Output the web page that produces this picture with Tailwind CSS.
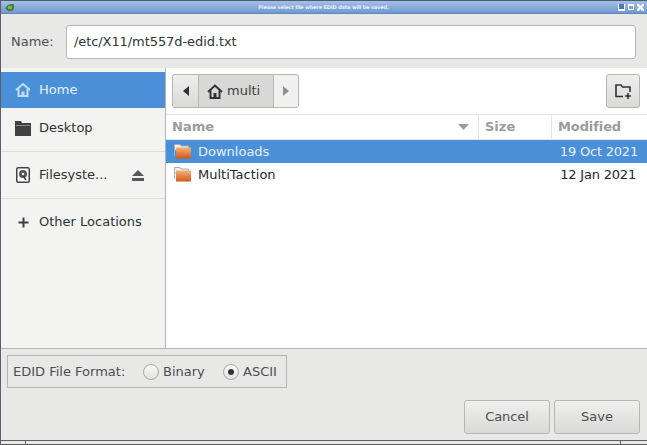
<!DOCTYPE html>
<html lang="en">
<head>
    <title>Save EDID</title>
    <meta name="viewport" content="width=device-width, initial-scale=1.0">
    <script src="https://cdn.jsdelivr.net/npm/@tailwindcss/browser@4"></script>
</head>
<body class="w-[647px] h-[445px] overflow-hidden bg-[#e8e8e7] text-[13px] text-[#2e3436] font-['DejaVu_Sans',sans-serif]">
    <div class="h-[445px] flex flex-col border-l border-[#5c5f66]">
        <!-- Title bar -->
        <header class="h-[14px] shrink-0 flex items-center justify-between pl-[4px] pr-[3px] border-t border-[#4b5a75] border-b border-b-[#5f86bd] bg-gradient-to-b from-[#a4c1e3] to-[#6e99d0]">
            <svg width="9" height="7" viewBox="0 0 9 7"><path d="M0 4 L3 1 L6 0 H9 V5 L7 7 H3 Z" fill="#4d7a35"/><path d="M3 2 H7 V5 H3 Z" fill="#7fb04f"/></svg>
            <span class="text-[5px] leading-none font-bold tracking-[-0.14px] text-white/80 ml-[15px]">Please select file where EDID data will be saved.</span>
            <div class="flex items-center gap-[3px]">
                <svg width="7" height="7" viewBox="0 0 7 7"><rect width="7" height="7" fill="#fff"/><rect x="1" y="0" width="5" height="5" fill="#4f79b2"/></svg>
                <svg width="6" height="6" viewBox="0 0 6 6"><rect width="6" height="6" fill="#fff"/><rect x="1" y="2" width="4" height="3" fill="#7ea5d8"/></svg>
                <svg width="7" height="7" viewBox="0 0 7 7"><path d="M0 0 H2 L3.5 2 L5 0 H7 V2 L5 3.5 L7 5 V7 H5 L3.5 5 L2 7 H0 V5 L2 3.5 L0 2 Z" fill="#fff"/></svg>
            </div>
        </header>

        <!-- Name row -->
        <div class="h-[54px] shrink-0 flex items-center pl-[10px] pr-[10px] pt-[1px]">
            <label class="w-[55px] text-[#4b4f50]">Name:</label>
            <div class="w-[570px] h-[34px] flex items-center pl-[7px] tracking-[-0.08px] bg-white border border-[#b5b5b3] rounded-[3px] text-[#2e3436]">/etc/X11/mt557d-edid.txt</div>
        </div>

        <!-- Places sidebar and file list -->
        <div class="h-[281px] shrink-0 flex border-b border-[#b5b5b3]">
            <aside class="w-[165px] shrink-0 bg-[#f3f3f2] border-r border-[#b5b5b3] pt-[4px]">
                <div class="h-[36px] flex items-center pl-[14px] gap-[8px] bg-[#4a90d9] text-[#e8f1fb]">
                    <svg width="16" height="16" viewBox="0 0 16 16" fill="none" stroke="#c5dcf5" stroke-width="2"><path d="M1 8 L8 2 L15 8"/><path d="M3.5 7 V14 H12.5 V7"/><rect x="6.5" y="9.5" width="3" height="4.5" fill="#c5dcf5" stroke="none"/></svg>
                    <span>Home</span>
                </div>
                <div class="h-[44px] pb-[3px] flex items-center pl-[14px] gap-[8px] border-b border-[#dcdcda]">
                    <svg width="16" height="16" viewBox="0 0 16 16"><path d="M0 1 H6 L7 3 H16 V16 H0 Z" fill="#3f4142"/><path d="M1 5 H15 V6 H1 Z" fill="#8a8c8c"/></svg>
                    <span>Desktop</span>
                </div>
                <div class="h-[47px] flex items-center pl-[15px] pr-[21px] border-b border-[#dcdcda]">
                    <svg class="mr-[9px]" width="14" height="16" viewBox="0 0 14 16"><rect x="0.75" y="0.75" width="12.5" height="14.5" rx="1.5" fill="#fff" stroke="#414344" stroke-width="1.5"/><circle cx="7" cy="7" r="4" fill="#55585a"/><circle cx="7" cy="7" r="1.2" fill="#fff"/><path d="M7 9 L10 13" stroke="#414344" stroke-width="1.5"/></svg>
                    <span class="flex-1">Filesyste...</span>
                    <svg width="12" height="11" viewBox="0 0 12 11" fill="#55585a"><path d="M6 0 L12 6 H0 Z"/><rect y="8" width="12" height="3"/></svg>
                </div>
                <div class="h-[46px] flex items-center pl-[17px] gap-[10px]">
                    <svg width="11" height="11" viewBox="0 0 11 11" fill="#3f4142"><rect x="4.5" y="0.5" width="2" height="10"/><rect x="0.5" y="4.5" width="10" height="2"/></svg>
                    <span>Other Locations</span>
                </div>
            </aside>

            <main class="flex-1 bg-white flex flex-col">
                <!-- Path bar -->
                <div class="h-[46px] shrink-0 flex items-start justify-between pt-[6px] pl-[6px] pr-[7px]">
                    <div class="h-[34px] flex border border-[#b5b5b3] rounded-[3px] bg-[#f0f0ef]">
                        <div class="w-[26px] flex items-center justify-center border-r border-[#b5b5b3] bg-gradient-to-b from-[#efefee] to-[#d9d9d7] rounded-l-[3px]">
                            <svg width="6" height="10" viewBox="0 0 6 10" fill="#2e3436"><path d="M6 0 V10 L0 5 Z"/></svg>
                        </div>
                        <div class="w-[75px] flex items-center pl-[8px] gap-[4px] bg-[#d8d8d6] border-r border-[#b5b5b3] text-[#3d4142]">
                            <svg width="16" height="15" viewBox="0 0 16 15" fill="none" stroke="#2e3436" stroke-width="2"><path d="M1 8 L8 1.5 L15 8"/><path d="M3.5 6.5 V14 H12.5 V6.5"/><rect x="6.5" y="9" width="3" height="5" fill="#2e3436" stroke="none"/></svg>
                            <span>multi</span>
                        </div>
                        <div class="w-[24px] flex items-center justify-center">
                            <svg width="6" height="10" viewBox="0 0 6 10" fill="#8f9293"><path d="M0 0 V10 L6 5 Z"/></svg>
                        </div>
                    </div>
                    <div class="w-[34px] h-[34px] flex items-center justify-center border border-[#b5b5b3] rounded-[3px] bg-gradient-to-b from-[#efefee] to-[#d9d9d7]">
                        <svg width="17" height="15" viewBox="0 0 17 15" fill="none" stroke="#2e3436" stroke-width="1.6"><path d="M8 12.5 H1 V1 H6 L7.5 3 H15 V8"/><path d="M13 9 V15 M10 12 H16"/></svg>
                    </div>
                </div>

                <!-- File list -->
                <div class="h-[26px] shrink-0 flex items-center border-t border-b border-[#e6e6e5] font-bold text-[#9a9c9c]">
                    <div class="w-[313px] h-full flex items-center justify-between pl-[6px] pr-[9px] border-r border-[#e6e6e5]">
                        <span>Name</span>
                        <svg width="11" height="6" viewBox="0 0 11 6" fill="#9a9c9c"><path d="M0 0 H11 L5.5 6 Z"/></svg>
                    </div>
                    <div class="w-[73px] h-full flex items-center pl-[6px] border-r border-[#e6e6e5]">Size</div>
                    <div class="flex-1 pl-[6px] tracking-[-0.1px]">Modified</div>
                </div>
                <div class="h-[23px] flex items-center justify-between pl-[8px] pr-[9px] bg-[#4a90d9] text-[#e8f1fb]">
                    <div class="flex items-center gap-[7px]">
                        <svg width="17" height="15" viewBox="0 0 17 15"><defs><linearGradient id="folderFront" x1="0" y1="0" x2="0" y2="1"><stop offset="0" stop-color="#f4b27c"/><stop offset="1" stop-color="#d4561a"/></linearGradient></defs><path d="M0.5 12 V0.5 H6 L7 2 H14.5 V6 H0.5 Z" fill="#f1f0ee" stroke="#b5aea6"/><rect x="2" y="3.5" width="15" height="11" fill="url(#folderFront)"/></svg>
                        <span>Downloads</span>
                    </div>
                    <span class="tracking-[-0.2px]">19 Oct 2021</span>
                </div>
                <div class="h-[23px] flex items-center justify-between pl-[8px] pr-[11px] text-[#232729]">
                    <div class="flex items-center gap-[7px]">
                        <svg width="17" height="15" viewBox="0 0 17 15"><path d="M0.5 12 V0.5 H6 L7 2 H14.5 V6 H0.5 Z" fill="#f1f0ee" stroke="#b5aea6"/><rect x="2" y="3.5" width="15" height="11" fill="url(#folderFront)"/></svg>
                        <span>MultiTaction</span>
                    </div>
                    <span class="tracking-[-0.2px]">12 Jan 2021</span>
                </div>
            </main>
        </div>

        <!-- Format options -->
        <div class="h-[33px] w-[280px] shrink-0 mt-[6px] ml-[6px] flex items-center pl-[5px] border border-[#b5b5b3] text-[#4b4f50]">
            <span class="w-[130px]">EDID File Format:</span>
            <span class="w-[16px] h-[16px] rounded-full border border-[#a9a9a7] bg-gradient-to-b from-[#fafafa] to-[#e2e2e0] mr-[4px]"></span>
            <span class="w-[60px]">Binary</span>
            <span class="w-[16px] h-[16px] rounded-full border border-[#a9a9a7] bg-gradient-to-b from-[#fafafa] to-[#e2e2e0] mr-[4px] flex items-center justify-center">
                <span class="w-[6px] h-[6px] rounded-full bg-[#2e3436]"></span>
            </span>
            <span>ASCII</span>
        </div>

        <!-- Actions -->
        <div class="shrink-0 mt-[12px] flex justify-end gap-[4px] pr-[7px]">
            <button class="w-[86px] h-[34px] border border-[#b5b5b3] rounded-[3px] bg-gradient-to-b from-[#efefee] to-[#d9d9d7] text-[#4b4f50] tracking-[-0.1px]">Cancel</button>
            <button class="w-[86px] h-[34px] border border-[#b5b5b3] rounded-[3px] bg-gradient-to-b from-[#efefee] to-[#d9d9d7] text-[#4b4f50]">Save</button>
        </div>

        <!-- Window bottom edge -->
        <div class="mt-[6px] h-[5px] flex border-t border-b border-[#5c5f66] bg-[#e8e8e7]">
            <div class="w-[25px] border-r border-[#5c5f66]"></div>
            <div class="flex-1 border-r border-[#5c5f66] mr-[26px]"></div>
        </div>
    </div>
</body>
</html>
